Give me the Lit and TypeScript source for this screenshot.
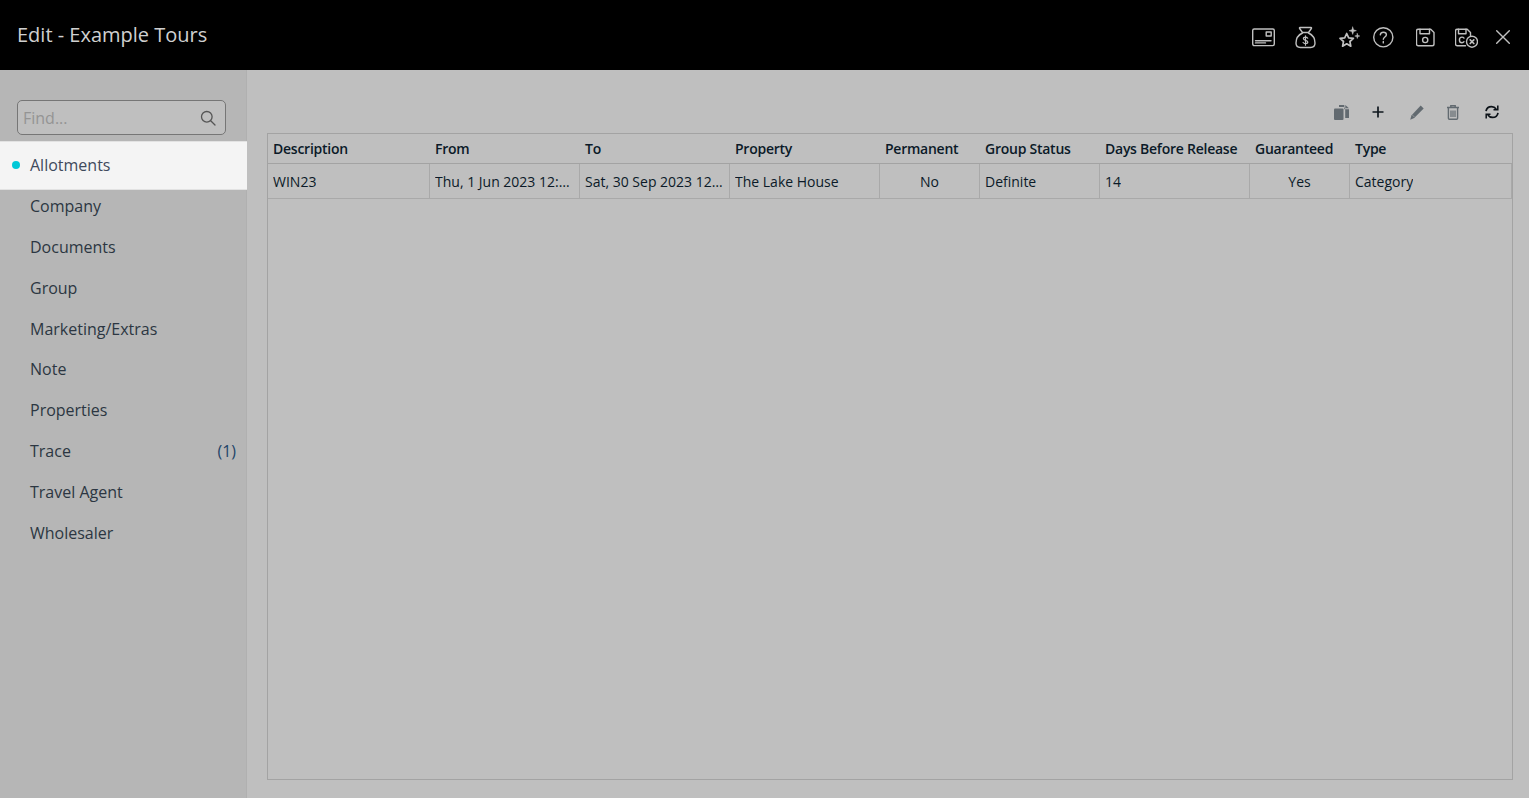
import { LitElement, css, html, svg } from 'lit'
import { customElement } from 'lit/decorators.js'

const navItems = [
  { label: 'Allotments', active: true },
  { label: 'Company' },
  { label: 'Documents' },
  { label: 'Group' },
  { label: 'Marketing/Extras' },
  { label: 'Note' },
  { label: 'Properties' },
  { label: 'Trace', count: '(1)' },
  { label: 'Travel Agent' },
  { label: 'Wholesaler' },
]

const columns = [
  { title: 'Description', value: 'WIN23', width: 162 },
  { title: 'From', value: 'Thu, 1 Jun 2023 12:00 PM', width: 150 },
  { title: 'To', value: 'Sat, 30 Sep 2023 12:00 PM', width: 150 },
  { title: 'Property', value: 'The Lake House', width: 150 },
  { title: 'Permanent', value: 'No', width: 100, center: true },
  { title: 'Group Status', value: 'Definite', width: 120 },
  { title: 'Days Before Release', value: '14', width: 150 },
  { title: 'Guaranteed', value: 'Yes', width: 100, center: true },
  { title: 'Type', value: 'Category', width: 162 },
]

const headerIcons = [
  {
    w: 23,
    body: svg`<rect x=".7" y="4" width="21.600" height="16.600" rx="1.500"/><rect x="14.200" y="7" width="5" height="4"/><path d="M3.500 15.700H19M3.500 17.900h10"/>`,
  },
  {
    w: 21,
    body: svg`<path d="M5 2.500h11c.5 0 .7.5.4 1L13.500 7.500h-6L4.600 3.500c-.3-.5-.1-1 .4-1z"/><path d="M7.500 8C3.200 10 1 14 1 18c0 3 2 4.500 4.500 4.500h10c2.500 0 4.500-1.500 4.500-4.500 0-4-2.200-8-6.500-10"/><path d="M12.700 13.200c-.5-.8-1.200-1.100-2.200-1.100-1.200 0-2.100.6-2.100 1.600 0 2.300 4.400 1 4.400 3.400 0 1-1 1.600-2.300 1.600-1.100 0-1.900-.4-2.400-1.200M10.500 10.800v9.400" stroke-width="1.200"/>`,
  },
  {
    w: 22,
    body: svg`<path d="M7.700 8.500l2 4.300 4.700.5-3.500 3.200.9 4.700-4.100-2.400-4.100 2.400.9-4.700L1 13.300l4.700-.5z" stroke-width="1.700"/><path d="M13.700 2l.9 2.800 2.800.9-2.800.9-.9 2.800-.9-2.800-2.800-.9 2.800-.9zM18.300 8.500l.6 1.900 1.900.6-1.900.6-.6 1.900-.6-1.900-1.900-.6 1.900-.6z" fill="currentColor" stroke-width=".5"/>`,
  },
  {
    w: 21,
    body: svg`<circle cx="10.300" cy="12.300" r="9.600"/><path d="M7.300 9.900c.2-1.700 1.500-2.700 3.100-2.700 1.700 0 3 1 3 2.500 0 2.300-3.100 2.300-3.100 4.600M10.300 16.400v1.500"/>`,
  },
  {
    w: 19,
    body: svg`<path d="M2.300 4.200h12.400l3.300 3.300v11.400a1.800 1.800 0 0 1-1.800 1.800H2.300a1.800 1.800 0 0 1-1.800-1.800V6a1.800 1.800 0 0 1 1.800-1.800z"/><path d="M4 4.200v4.600h9.500V4.200"/><circle cx="9.200" cy="15" r="2.600"/>`,
  },
  {
    w: 23,
    body: svg`<path d="M10.500 20.700H2.300a1.800 1.800 0 0 1-1.800-1.800V6a1.800 1.800 0 0 1 1.800-1.800h9.900l3.300 3.300v3"/><path d="M3.500 4.200v4.600h7.500V4.200"/><path d="M9 13.100c-.5-.7-1.200-1-2-1-1.500 0-2.600 1.200-2.600 2.800s1.100 2.800 2.600 2.800c.8 0 1.500-.3 2-1"/><circle cx="17" cy="16.700" r="5.500"/><path d="M15.200 14.900l3.600 3.600M18.800 14.900l-3.600 3.600" stroke-width="1.700"/>`,
  },
  {
    w: 14,
    body: svg`<path d="M.7 5.700l12.600 12.600M13.300 5.700L.7 18.300"/>`,
  },
]

@customElement('app-root')
export class AppRoot extends LitElement {
  render() {
    return html`
      <header class="top">
        <h1>Edit - Example Tours</h1>
        <div class="top-icons">
          ${headerIcons.map(
            (icon, i) => html`
              <svg class="ico-${i}" width=${icon.w} height="24" viewBox="0 0 ${icon.w} 24" fill="none" stroke="currentColor" stroke-width="1.400" stroke-linejoin="round" stroke-linecap="round">${icon.body}</svg>
            `,
          )}
        </div>
      </header>
      <div class="body">
        <aside class="side">
          <div class="find">
            <span>Find...</span>
            <svg width="16" height="16" viewBox="0 0 16 16" fill="none" stroke="currentColor" stroke-width="1.300"><circle cx="6.800" cy="6.800" r="5.300"/><path d="M10.700 10.700l4.300 4.300" stroke-linecap="round"/></svg>
          </div>
          <nav>
            ${navItems.map(
              (item) => html`
                <div class="item ${item.active ? 'active' : ''}">
                  <span>${item.label}</span>
                  ${item.count ? html`<span class="count">${item.count}</span>` : ''}
                </div>
              `,
            )}
          </nav>
        </aside>
        <main class="main">
          <div class="tools">
            <svg width="15" height="15" viewBox="0 0 15 15" fill="#626a70"><rect y="3.500" width="9.500" height="11.500" rx="1"/><path d="M5 0h5.300v4.300H15V13h-3.800V3.700a1.600 1.600 0 0 0-1.600-1.600H5z"/><path d="M11.300 0L15 3.300h-3.700z"/></svg>
            <svg width="12" height="12" viewBox="0 0 12 12" fill="none" stroke="#10181f" stroke-width="1.700"><path d="M6 .5v11M.5 6h11"/></svg>
            <svg width="14" height="15" viewBox="0 0 14 15" fill="#626a70"><path d="M10.700 .5l3 3-9.500 9.500-4 1.700 1.200-4.300z"/><path d="M2.700 10.300l1.500 1.500" stroke="#bfbfbf" stroke-width=".7"/></svg>
            <svg width="12" height="15" viewBox="0 0 12 15" fill="none" stroke="#626a70" stroke-width="1.400"><path d="M0 2.500h12" stroke-width="1.500"/><path d="M3.800 2.500V.8h4.400v1.700"/><path d="M1.400 3v10.300a1 1 0 0 0 1 1h7.200a1 1 0 0 0 1-1V3"/><path d="M4 5.500v6.500M6 5.500v6.500M8 5.500v6.500" stroke-width="1.200"/></svg>
            <svg width="14" height="14" viewBox="0 0 14 14" fill="none" stroke="#0c1218" stroke-width="1.700"><path d="M1 6.200C1.500 3.300 3.800 1.600 6.500 1.600c2 0 3.500.8 4.700 2.400"/><path d="M13 7.800c-.5 2.900-2.800 4.600-5.500 4.600-2 0-3.500-.8-4.700-2.400"/><path d="M12.800 .5v4.300H8.500M1.200 13.500V9.200h4.300" stroke-width="1.500"/></svg>
          </div>
          <div class="grid">
            <div class="row head">
              ${columns.map((c) => html`<div class="cell" style="width:${c.width}px">${c.title}</div>`)}
            </div>
            <div class="row data">
              ${columns.map(
                (c) => html`<div class="cell ${c.center ? 'center' : ''}" style="width:${c.width}px"><span>${c.value}</span></div>`,
              )}
            </div>
          </div>
        </main>
      </div>
    `
  }

  static styles = css`
    :host {
      display: flex;
      flex-direction: column;
      height: 798px;
      width: 1529px;
      overflow: hidden;
      font-family: 'Open Sans', 'Noto Sans', sans-serif;
      font-size: 14px;
      color: #0b1a28;
    }

    .top {
      height: 70px;
      flex: none;
      box-sizing: border-box;
      background: #000;
      display: flex;
      align-items: center;
      justify-content: space-between;
      padding: 0 19.500px 0 17px;
    }
    h1 {
      margin: 0 0 2px;
      font-size: 20px;
      font-weight: 400;
      line-height: 27px;
      color: #d0d0d0;
    }
    .top-icons {
      display: flex;
      align-items: center;
      color: #c0c0c0;
      position: relative;
      top: 2px;
    }
    .ico-0 { margin-right: 20px; }
    .ico-1 { margin-right: 22.500px; }
    .ico-2 { margin-right: 12px; }
    .ico-3 { margin-right: 22.500px; }
    .ico-4 { margin-right: 20px; }
    .ico-5 { margin-right: 17.500px; }

    .body {
      flex: 1;
      display: flex;
      min-height: 0;
    }
    .side {
      width: 247px;
      flex: none;
      box-sizing: border-box;
      background: #b6b6b6;
      border-right: 1px solid #b0b0b0;
      padding-top: 30px;
    }
    .find {
      box-sizing: border-box;
      width: 209px;
      height: 35px;
      margin-left: 17px;
      padding: 0 9px 0 5px;
      display: flex;
      align-items: center;
      justify-content: space-between;
      border: 1px solid #767676;
      border-radius: 5px;
      background: #bfbfbf;
      color: #949494;
      font-size: 16px;
    }
    .find svg {
      color: #555;
    }
    nav {
      margin-top: 10px;
    }
    .item {
      box-sizing: border-box;
      height: 40.830px;
      padding: 0 10px 0 30px;
      display: flex;
      align-items: center;
      justify-content: space-between;
      font-size: 16px;
      color: #2c3642;
    }
    .item.active {
      height: 49px;
      margin: -4px 0 -4.300px;
      width: 247px;
      padding-bottom: 1px;
      background: #f4f4f4;
      border: 1px solid #e2e2e2;
      border-width: 1px 0;
      position: relative;
      color: #3f4a5c;
    }
    .item.active::before {
      content: '';
      position: absolute;
      left: 12px;
      top: 19px;
      width: 8px;
      height: 8px;
      border-radius: 50%;
      background: #00c8d7;
    }
    .count {
      color: #1f4468;
    }

    .main {
      flex: 1;
      background: #bfbfbf;
      padding: 0 16px 18px 20px;
      display: flex;
      flex-direction: column;
      min-width: 0;
    }
    .tools {
      height: 63px;
      flex: none;
      box-sizing: border-box;
      padding: 21px 14px 0 0;
      display: flex;
      justify-content: flex-end;
      align-items: center;
      gap: 23px;
    }
    .tools svg:nth-child(3),
    .tools svg:nth-child(5) {
      margin-left: 3px;
    }
    .grid {
      flex: 1;
      border: 1px solid #a3a3a3;
      min-height: 0;
    }
    .row {
      display: flex;
    }
    .row.head {
      height: 30px;
      box-sizing: border-box;
      border-bottom: 1px solid #a3a3a3;
      font-weight: 600;
      letter-spacing: -0.25px;
    }
    .row.data {
      height: 35px;
      box-sizing: border-box;
      border-bottom: 1px solid #a9a9a9;
    }
    .cell {
      box-sizing: border-box;
      flex: none;
      padding: 0 5px;
      display: flex;
      align-items: center;
      white-space: nowrap;
      overflow: hidden;
    }
    .cell span {
      overflow: hidden;
      text-overflow: ellipsis;
    }
    .row.data .cell {
      border-right: 1px solid #a9a9a9;
    }
    .cell.center {
      justify-content: center;
    }
  `
}

declare global {
  interface HTMLElementTagNameMap {
    'app-root': AppRoot
  }
}
